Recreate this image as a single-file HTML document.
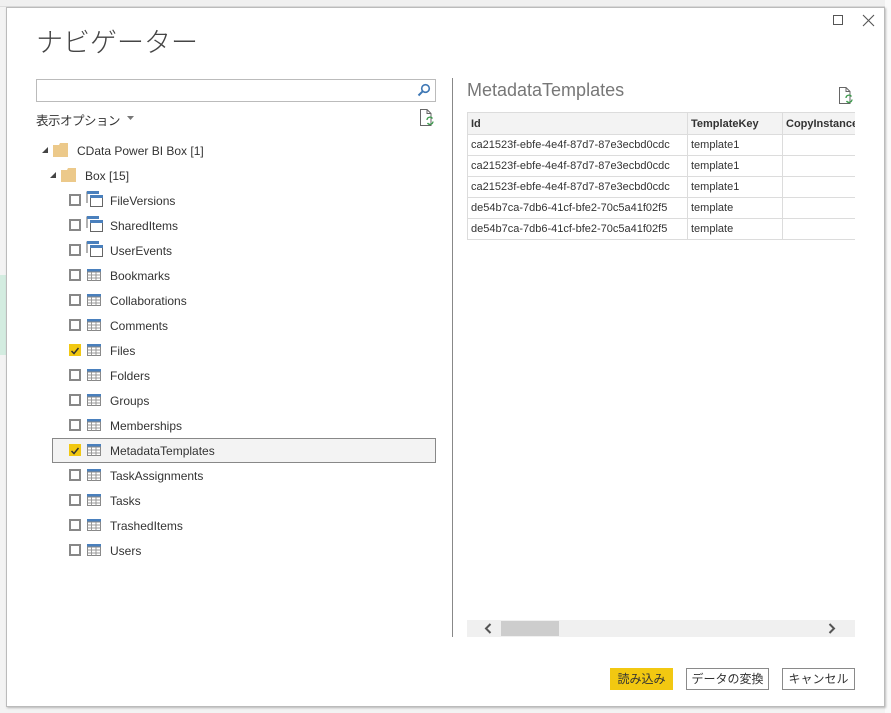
<!DOCTYPE html>
<html><head><meta charset="utf-8"><style>
*{margin:0;padding:0;box-sizing:border-box}
body{width:891px;height:713px;overflow:hidden;background:#f3f3f3;font-family:"Segoe UI","Liberation Sans","Noto Sans CJK JP",sans-serif;color:#333;position:relative}
.a{position:absolute}
.topbar{left:0;top:0;width:891px;height:7px;background:#f0f0f0;border-bottom:1px solid #ddd}
.dlg{left:6px;top:7px;width:879px;height:700px;background:#fff;border:1px solid #bbb;box-shadow:1px 1px 2px rgba(0,0,0,.25)}
.t{font-size:12px;white-space:nowrap}
.cb{width:12px;height:12px;border:2px solid #888;background:#fff}
.cbc{width:12px;height:12px;background:#f2c811}
table{border-collapse:collapse;font-size:11px;font-family:"Liberation Sans","Noto Sans CJK JP",sans-serif}
td,th{border:1px solid #dcdcdc;height:21px;padding:0 3px;text-align:left;white-space:nowrap;overflow:hidden;color:#333}
th{background:#f3f3f3;font-weight:bold;height:22px}
.btn{height:22px;font-size:12px;text-align:center;line-height:20px;border:1px solid #8a8a8a;background:#fff}
</style></head><body>
<div class="a topbar"></div>
<div class="a" style="left:0;top:275px;width:6px;height:80px;background:#d3ece0"></div>
<div class="a" style="left:885px;top:0;width:6px;height:713px;background:#fafafa"></div>
<div class="a dlg"></div>
<div class="a" style="left:833px;top:15px;width:10px;height:10px;border:1px solid #555"></div>
<svg class="a" style="left:862px;top:14px" width="13" height="13"><path d="M1 1L12 12M12 1L1 12" stroke="#555" stroke-width="1.1"/></svg>
<div class="a" style="left:36px;top:21px;font-size:27px;color:#444;font-family:'Liberation Sans','Noto Sans CJK JP',sans-serif;font-weight:300">ナビゲーター</div>
<div class="a" style="left:36px;top:79px;width:400px;height:23px;border:1px solid #bbb"></div>
<svg class="a" style="left:417px;top:83px" width="14" height="14"><circle cx="8.5" cy="5.5" r="3.8" fill="none" stroke="#3f78b5" stroke-width="1.6"/><path d="M5.8 8.2L1.5 12.5" stroke="#3f78b5" stroke-width="2"/></svg>
<div class="a t" style="left:36px;top:110px;font-size:12.5px;font-family:'Liberation Sans','Noto Sans CJK JP',sans-serif;letter-spacing:-0.5px">表示オプション</div>
<svg class="a" style="left:127px;top:116px" width="7" height="5"><path d="M0 0H7L3.5 4Z" fill="#777"/></svg>
<svg class="a" style="left:419px;top:109px" width="16" height="18"><path d="M1.5 .5H8L12 4.5V16.5H1.5Z" fill="#fff" stroke="#666"/><path d="M8 .5V4.5H12" fill="none" stroke="#666"/><path d="M8 11a3 3 0 0 1 5.5-1.5M14 12.5a3 3 0 0 1-5.5 1.5" fill="none" stroke="#3a9a4a" stroke-width="1.3"/></svg>
<svg class="a" style="left:42px;top:147px" width="6" height="6"><path d="M6 0V6H0Z" fill="#444"/></svg>
<svg class="a" style="left:53px;top:143px" width="16" height="14"><path d="M0 2H6L7 0H15V14H0Z" fill="#ecc98a"/></svg>
<div class="a t" style="left:77px;top:144px">CData Power BI Box [1]</div>
<svg class="a" style="left:50px;top:172px" width="6" height="6"><path d="M6 0V6H0Z" fill="#444"/></svg>
<svg class="a" style="left:61px;top:168px" width="16" height="14"><path d="M0 2H6L7 0H15V14H0Z" fill="#ecc98a"/></svg>
<div class="a t" style="left:85px;top:169px">Box [15]</div>
<div class="a" style="left:52px;top:438px;width:384px;height:25px;background:#f3f3f3;border:1px solid #888"></div>
<div id="rows"></div>
<script>
var items=[["FileVersions",1,0],["SharedItems",1,0],["UserEvents",1,0],["Bookmarks",0,0],["Collaborations",0,0],["Comments",0,0],["Files",0,1],["Folders",0,0],["Groups",0,0],["Memberships",0,0],["MetadataTemplates",0,1],["TaskAssignments",0,0],["Tasks",0,0],["TrashedItems",0,0],["Users",0,0]];
var h="";
items.forEach(function(it,i){var c=200+i*25;
h+=it[2]?'<div class="a cbc" style="left:69px;top:'+(c-6)+'px"><svg width="12" height="12"><path d="M2.5 6L5 8.5L9.5 3" fill="none" stroke="#333" stroke-width="1.5"/></svg></div>':'<div class="a cb" style="left:69px;top:'+(c-6)+'px"></div>';
if(it[1])h+='<svg class="a" style="left:86px;top:'+(c-9)+'px" width="18" height="17"><path d="M1 12V1H13" fill="none" stroke="#666"/><rect x="1" y="0" width="12" height="3" fill="#4a80bd"/><rect x="4.5" y="4.5" width="12" height="11" fill="#fff" stroke="#666"/><rect x="4" y="4" width="13" height="3" fill="#4a80bd"/></svg>';
else h+='<svg class="a" style="left:87px;top:'+(c-6)+'px" width="14" height="12"><rect x="0" y="0" width="14" height="3" fill="#4a80bd"/><rect x=".5" y="3" width="13" height="8.5" fill="#fff" stroke="#888"/><path d="M.5 6H13.5M.5 9H13.5M4.5 3V11.5M9 3V11.5" stroke="#999"/></svg>';
h+='<div class="a t" style="left:110px;top:'+(c-6)+'px">'+it[0]+'</div>';});
document.getElementById("rows").innerHTML=h;
</script>
<div class="a" style="left:452px;top:78px;width:1px;height:559px;background:#888"></div>
<div class="a" style="left:467px;top:80px;font-size:18px;color:#777">MetadataTemplates</div>
<svg class="a" style="left:838px;top:87px" width="16" height="18"><path d="M1.5 .5H8L12 4.5V16.5H1.5Z" fill="#fff" stroke="#666"/><path d="M8 .5V4.5H12" fill="none" stroke="#666"/><path d="M8 11a3 3 0 0 1 5.5-1.5M14 12.5a3 3 0 0 1-5.5 1.5" fill="none" stroke="#3a9a4a" stroke-width="1.3"/></svg>
<div class="a" style="left:467px;top:112px;width:388px;overflow:hidden">
<table style="width:420px;table-layout:fixed">
<tr><th style="width:220px">Id</th><th style="width:95px">TemplateKey</th><th>CopyInstanceOnItemCopy</th></tr>
<tr><td>ca21523f-ebfe-4e4f-87d7-87e3ecbd0cdc</td><td>template1</td><td></td></tr>
<tr><td>ca21523f-ebfe-4e4f-87d7-87e3ecbd0cdc</td><td>template1</td><td></td></tr>
<tr><td>ca21523f-ebfe-4e4f-87d7-87e3ecbd0cdc</td><td>template1</td><td></td></tr>
<tr><td>de54b7ca-7db6-41cf-bfe2-70c5a41f02f5</td><td>template</td><td></td></tr>
<tr><td>de54b7ca-7db6-41cf-bfe2-70c5a41f02f5</td><td>template</td><td></td></tr>
</table></div>
<div class="a" style="left:467px;top:620px;width:388px;height:17px;background:#f0f0f0"></div>
<div class="a" style="left:501px;top:621px;width:58px;height:15px;background:#cdcdcd"></div>
<svg class="a" style="left:484px;top:623px" width="8" height="11"><path d="M6.5 1L2 5.5L6.5 10" fill="none" stroke="#555" stroke-width="2"/></svg>
<svg class="a" style="left:828px;top:623px" width="8" height="11"><path d="M1.5 1L6 5.5L1.5 10" fill="none" stroke="#555" stroke-width="2"/></svg>
<div class="a btn" style="left:610px;top:668px;width:63px;background:#f2c811;border-color:#f2c811;font-family:'Liberation Sans','Noto Sans CJK JP',sans-serif">読み込み</div>
<div class="a btn" style="left:686px;top:668px;width:83px;font-family:'Liberation Sans','Noto Sans CJK JP',sans-serif">データの変換</div>
<div class="a btn" style="left:782px;top:668px;width:73px;font-family:'Liberation Sans','Noto Sans CJK JP',sans-serif">キャンセル</div>
</body></html>
